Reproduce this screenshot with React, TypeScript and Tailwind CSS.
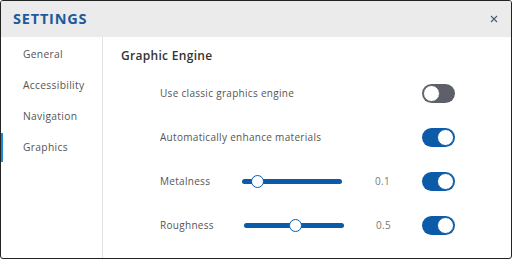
import React from "react";

const font = { fontFamily: '"Open Sans", "Noto Sans", sans-serif' };

function Toggle({ on }: { on: boolean }) {
  return on ? (
    <div className="w-[33px] h-[19px] rounded-full bg-[#0b5ba8] flex items-center justify-end pr-[1px] shrink-0">
      <div className="w-[17px] h-[17px] rounded-full bg-white border-[1.5px] border-[#0b5ba8]" />
    </div>
  ) : (
    <div className="w-[33px] h-[19px] rounded-full bg-[#5d6068] flex items-center pl-[1px] shrink-0">
      <div className="w-[17px] h-[17px] rounded-full bg-white border-[1.5px] border-[#5d6068]" />
    </div>
  );
}

function Slider({ pos }: { pos: number }) {
  return (
    <div className="relative w-[100px] h-[13px] flex items-center shrink-0">
      <div className="w-full h-[5px] rounded-full bg-[#0b5ba8]" />
      <div
        className="absolute top-0 w-[13px] h-[13px] rounded-full bg-white border-[1.5px] border-[#0b5ba8]"
        style={{ left: `${pos}px` }}
      />
    </div>
  );
}

export default function App() {
  const items = ["General", "Accessibility", "Navigation", "Graphics"];
  return (
    <div
      className="w-[512px] h-[259px] border border-[#222] rounded-[3px] overflow-hidden bg-white flex flex-col"
      style={font}
    >
      <div className="h-[36px] bg-[#ebebeb] flex items-center justify-between pl-[12px] pr-[13px] shrink-0">
        <span className="text-[14.5px] font-bold tracking-[0.8px] text-[#1c5a9c]">SETTINGS</span>
        <svg width="8" height="8" viewBox="0 0 8 8">
          <path d="M1 1 L7 7 M7 1 L1 7" stroke="#4a5a72" strokeWidth="1.1" />
        </svg>
      </div>
      <div className="flex flex-1">
        <div className="w-[102px] border-r border-[#e2e2e8] pt-[2px] shrink-0">
          {items.map((it) => (
            <div key={it} className="relative h-[31px] flex items-center pl-[22px]">
              {it === "Graphics" && (
                <div className="absolute left-0 top-[1px] w-[2px] h-[29px] bg-[#1a8ad4]" />
              )}
              <span className="text-[10.3px] tracking-[0.3px] text-[#555]">{it}</span>
            </div>
          ))}
        </div>
        <div className="flex-1 flex flex-col">
          <div className="pl-[18px] pt-[5px] h-[34px]">
            <span className="text-[12px] leading-[18px] font-semibold tracking-[0.3px] text-[#333]">
              Graphic Engine
            </span>
          </div>
          <div className="h-[44px] flex items-center pl-[57px] pr-[56px]">
            <span className="text-[10px] tracking-[0.3px] text-[#555]">Use classic graphics engine</span>
            <div className="ml-auto">
              <Toggle on={false} />
            </div>
          </div>
          <div className="h-[44px] flex items-center pl-[57px] pr-[56px]">
            <span className="text-[10px] tracking-[0.3px] text-[#555]">Automatically enhance materials</span>
            <div className="ml-auto">
              <Toggle on />
            </div>
          </div>
          <div className="h-[44px] flex items-center pl-[57px] pr-[56px]">
            <span className="text-[10px] tracking-[0.3px] text-[#555] w-[82px]">Metalness</span>
            <Slider pos={9} />
            <span className="ml-[33px] text-[10px] tracking-[0.3px] text-[#777]">0.1</span>
            <div className="ml-auto">
              <Toggle on />
            </div>
          </div>
          <div className="h-[45px] flex items-center pl-[57px] pr-[56px]">
            <span className="text-[10px] tracking-[0.3px] text-[#555] w-[84px]">Roughness</span>
            <Slider pos={45} />
            <span className="ml-[32px] text-[10px] tracking-[0.3px] text-[#777]">0.5</span>
            <div className="ml-auto">
              <Toggle on />
            </div>
          </div>
        </div>
      </div>
    </div>
  );
}
